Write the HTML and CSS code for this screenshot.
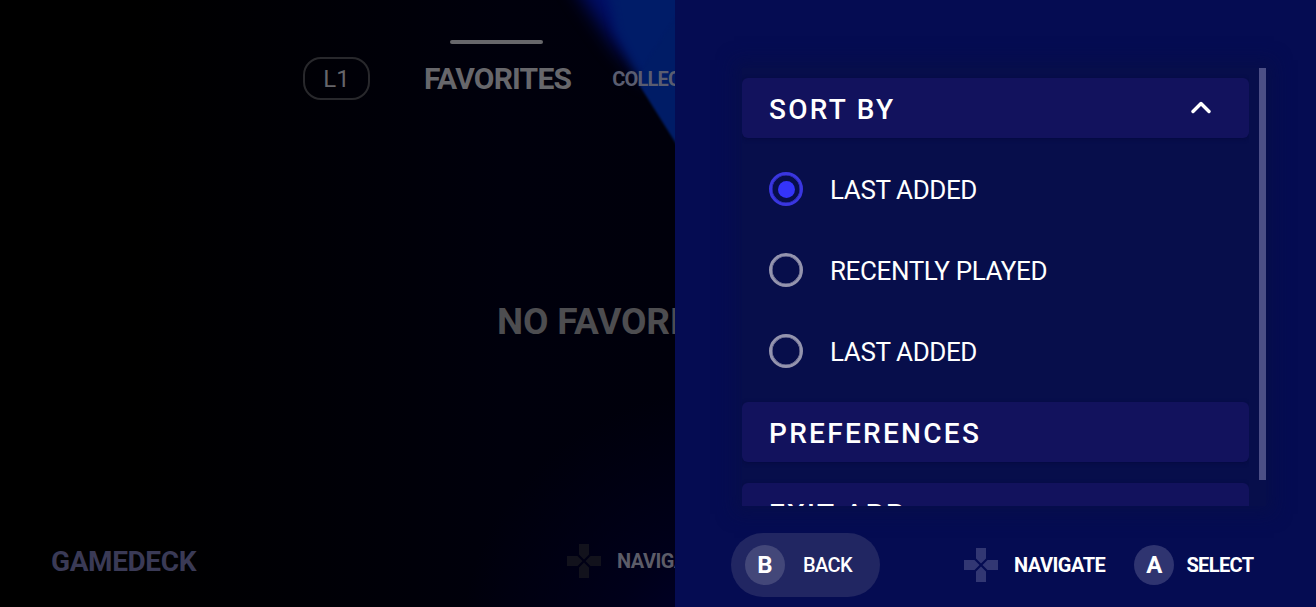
FILE: index.html
```html
<!DOCTYPE html>
<html lang="en">
<head>
  <meta charset="UTF-8" />
  <title>GameDeck</title>
  <link rel="stylesheet" href="styles.css">
</head>
<body>
  <svg class="defs" width="0" height="0">
    <symbol id="dpad" viewBox="0 0 34 34">
      <path d="M12 0h10v10.500l-5 5-5-5zM12 34h10V23.500l-5-5-5 5zM0 12v10h10.500l5-5-5-5zM34 12v10H23.500l-5-5 5-5z" />
    </symbol>
  </svg>

  <div class="app">
    <main class="home">
      <svg class="backdrop" viewBox="0 0 675 607">
        <defs>
          <linearGradient id="beam" gradientUnits="userSpaceOnUse" x1="575" y1="30" x2="632" y2="0">
            <stop offset="0" stop-color="#000040" />
            <stop offset="0.5" stop-color="#000c66" />
            <stop offset="1" stop-color="#001c68" />
          </linearGradient>
          <filter id="soft" x="-50%" y="-50%" width="200%" height="200%" color-interpolation-filters="sRGB"><feGaussianBlur stdDeviation="9" /></filter>
          <filter id="mid" color-interpolation-filters="sRGB"><feGaussianBlur stdDeviation="5" /></filter>
          <filter id="edge" color-interpolation-filters="sRGB"><feGaussianBlur stdDeviation="1.2" /></filter>
        </defs>
        <path d="M560 -40L582 0L614 46L646 80L690 80V-40z" fill="url(#beam)" filter="url(#soft)" />
        <path d="M608 -20L616 30L638 74L690 110V-20z" fill="#001c68" filter="url(#mid)" />
        <path d="M644 66L638 83L675 142L700 184V-20z" fill="#001c66" filter="url(#edge)" />
      </svg>

      <header class="tabs">
        <span class="key">L1</span>
        <span class="tab active">FAVORITES</span>
        <span class="tab">COLLECTIONS</span>
      </header>
      <p class="empty">NO FAVORITES</p>
      <footer class="home-footer">
        <span class="brand">GAMEDECK</span>
        <span class="hint">
          <svg class="dpad"><use href="#dpad" /></svg>
          NAVIGATE
        </span>
      </footer>
    </main>

    <aside class="panel">
      <div class="menu-wrap">
        <div class="menu">
          <div class="item">
            SORT BY
            <svg class="chevron" viewBox="0 0 20 13"><path d="M2 10.500L10 2.500L18 10.500" /></svg>
          </div>
          <div class="option"><span class="radio checked"></span><span>LAST ADDED</span></div>
          <div class="option"><span class="radio"></span><span>RECENTLY PLAYED</span></div>
          <div class="option"><span class="radio"></span><span>LAST ADDED</span></div>
          <div class="item">PREFERENCES</div>
          <div class="item">EXIT APP</div>
        </div>
        <div class="scrollbar"></div>
      </div>
      <footer class="actions">
        <span class="back"><span class="button">B</span>BACK</span>
        <span class="hint">
          <svg class="dpad"><use href="#dpad" /></svg>
          NAVIGATE
        </span>
        <span class="select"><span class="button">A</span>SELECT</span>
      </footer>
    </aside>
  </div>
</body>
</html>
```

FILE: styles.css
```css
* { box-sizing: border-box; }
body { margin: 0; background: #000; font-family: Roboto, sans-serif; color: #fff; overflow: hidden; }
.defs { position: absolute; }
.app { display: grid; grid-template-columns: 675px 641px; height: 607px; white-space: nowrap; }

/* dimmed home screen */
.home {
  position: relative;
  display: flex;
  flex-direction: column;
  overflow: hidden;
  background:
    radial-gradient(circle at 720px 650px, #00002e 0, #00001a 110px, transparent 260px),
    linear-gradient(90deg, #000 20%, #00000c 75%, #00000b);
}
.backdrop { position: absolute; left: 0; top: 0; width: 675px; height: 607px; }
.tabs, .empty, .home-footer { position: relative; }
.tabs { display: flex; align-items: center; height: 77px; margin-top: 40px; padding-left: 303px; }
.tabs > *, .brand { flex: none; }
.key {
  width: 67px;
  height: 43px;
  border: 2px solid #28282c;
  border-radius: 18px;
  font-size: 24px;
  line-height: 40px;
  text-align: center;
  color: #66666a;
}
.tab { margin-left: 41px; font-size: 20px; font-weight: 700; letter-spacing: -0.8px; color: #5a5d70; }
.tab.active {
  display: flex;
  flex-direction: column;
  align-items: center;
  height: 77px;
  margin-left: 54px;
  font-size: 30px;
  line-height: 70px;
  letter-spacing: -0.8px;
  color: #67676b;
}
.tab.active::before { content: ""; width: 93px; height: 4px; margin-left: -2px; border-radius: 2px; background: #67676b; }
.empty { margin: 182px 0 0 497px; font-size: 37px; font-weight: 700; line-height: 46px; letter-spacing: -0.2px; color: #4d4d50; }
.home-footer { display: flex; align-items: center; margin-top: auto; height: 92px; padding-left: 51px; }
.brand { width: 516px; font-size: 28px; font-weight: 700; letter-spacing: -0.4px; color: #3a3a56; }
.hint { display: flex; align-items: center; gap: 16px; font-size: 20px; font-weight: 700; letter-spacing: -0.5px; }
.dpad { flex: none; width: 34px; height: 34px; fill: #323773; }
.home .hint { color: #5c5c68; }
.home .dpad { fill: #12121c; }

/* side panel */
.panel { background: #050c52; padding: 68px 50px 0 67px; }
.menu-wrap { display: flex; gap: 10px; height: 438px; background: #070e4b; box-shadow: 0 0 16px 8px #070e4b; }
.menu { display: flex; flex-direction: column; gap: 21px; width: 507px; padding-top: 10px; overflow: hidden; }
.item {
  display: flex;
  flex: none;
  align-items: center;
  justify-content: space-between;
  height: 60px;
  padding: 2px 38px 0 27px;
  border-radius: 6px;
  background: #12125d;
  box-shadow: 0 1px 4px #050a40;
  font-size: 28px;
  font-weight: 500;
  letter-spacing: 2.3px;
}
.chevron { width: 20px; height: 13px; margin-top: -4px; fill: none; stroke: #fff; stroke-width: 3.4; stroke-linecap: round; stroke-linejoin: round; }
.option { display: flex; flex: none; align-items: center; gap: 27px; height: 60px; padding-left: 27px; font-size: 26px; letter-spacing: -0.4px; }
.option span + span { padding-top: 1px; }
.radio { display: flex; align-items: center; justify-content: center; width: 34px; height: 34px; border: 3px solid #9494ae; box-shadow: inset 0 0 0 0.5px #9494ae; border-radius: 50%; }
.radio.checked { border-color: #3a36e0; box-shadow: inset 0 0 0 0.5px #3a36e0; }
.radio.checked::before { content: ""; width: 17px; height: 17px; border-radius: 50%; background: #3434fa; }
.scrollbar { width: 7px; height: 412px; background: #4c4f86; }

.actions { display: flex; align-items: center; height: 64px; margin: 27px -4px 0 -11px; font-size: 20px; font-weight: 700; letter-spacing: -0.6px; }
.button { display: flex; align-items: center; justify-content: center; width: 40px; height: 40px; border-radius: 50%; background: #2f3470; font-size: 24px; font-weight: 700; letter-spacing: 0; }
.back { display: flex; align-items: center; gap: 18px; width: 149px; height: 64px; margin-right: 84px; padding-left: 14px; border-radius: 32px; background: #212662; font-weight: 500; }
.back .button { background: #434779; }
.select { display: flex; align-items: center; gap: 12px; margin-left: 29px; }
```
